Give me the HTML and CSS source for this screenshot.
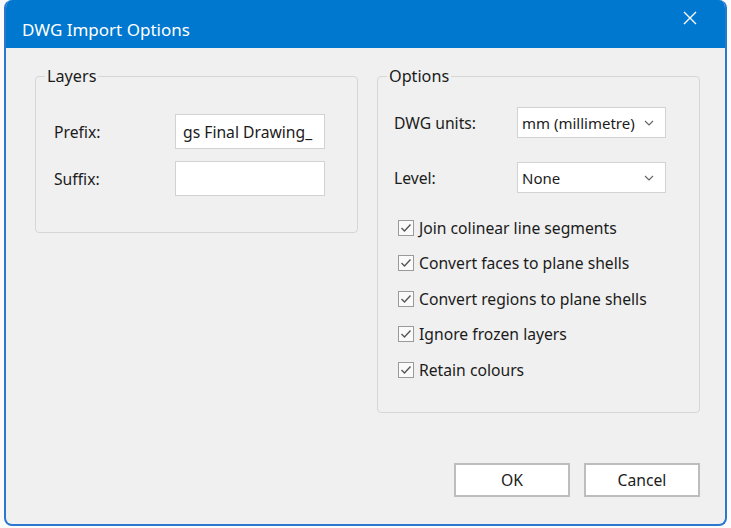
FILE: index.html
```html
<!DOCTYPE html>
<html lang="en">
<head>
    <meta charset="UTF-8">
    <title>DWG Import Options</title>
    <link rel="stylesheet" href="styles.css">
</head>
<body>
    <div class="window">
        <div class="titlebar">
            <span class="title">DWG Import Options</span>
            <button class="close" title="Close">
                <svg width="14" height="14" viewBox="0 0 14 14"><path d="M1 1L13 13M13 1L1 13" stroke="#fff" stroke-width="1.4" fill="none"/></svg>
            </button>
        </div>

        <div class="content">
            <div class="groups">
                <fieldset class="group layers">
                    <legend>Layers</legend>
                    <div class="field">
                        <label>Prefix:</label>
                        <input class="textbox" type="text" value="gs Final Drawing_">
                    </div>
                    <div class="field">
                        <label>Suffix:</label>
                        <input class="textbox" type="text" value="">
                    </div>
                </fieldset>

                <fieldset class="group options">
                    <legend>Options</legend>
                    <div class="field">
                        <label>DWG units:</label>
                        <div class="combo">
                            <span>mm (millimetre)</span>
                            <svg width="10" height="6" viewBox="0 0 10 6"><path d="M1 1L5 5L9 1" stroke="#666" stroke-width="1.2" fill="none"/></svg>
                        </div>
                    </div>
                    <div class="field">
                        <label>Level:</label>
                        <div class="combo">
                            <span>None</span>
                            <svg width="10" height="6" viewBox="0 0 10 6"><path d="M1 1L5 5L9 1" stroke="#666" stroke-width="1.2" fill="none"/></svg>
                        </div>
                    </div>
                    <div class="checks">
                        <label class="check"><span class="box"><svg width="12" height="10" viewBox="0 0 12 10"><path d="M1.5 5L4.5 8L10.5 1.5" stroke="#555" stroke-width="1.4" fill="none"/></svg></span>Join colinear line segments</label>
                        <label class="check"><span class="box"><svg width="12" height="10" viewBox="0 0 12 10"><path d="M1.5 5L4.5 8L10.5 1.5" stroke="#555" stroke-width="1.4" fill="none"/></svg></span>Convert faces to plane shells</label>
                        <label class="check"><span class="box"><svg width="12" height="10" viewBox="0 0 12 10"><path d="M1.5 5L4.5 8L10.5 1.5" stroke="#555" stroke-width="1.4" fill="none"/></svg></span>Convert regions to plane shells</label>
                        <label class="check"><span class="box"><svg width="12" height="10" viewBox="0 0 12 10"><path d="M1.5 5L4.5 8L10.5 1.5" stroke="#555" stroke-width="1.4" fill="none"/></svg></span>Ignore frozen layers</label>
                        <label class="check"><span class="box"><svg width="12" height="10" viewBox="0 0 12 10"><path d="M1.5 5L4.5 8L10.5 1.5" stroke="#555" stroke-width="1.4" fill="none"/></svg></span>Retain colours</label>
                    </div>
                </fieldset>
            </div>

            <div class="buttons">
                <button class="btn">OK</button>
                <button class="btn">Cancel</button>
            </div>
        </div>
    </div>
</body>
</html>
```

FILE: styles.css
```css
body {
    margin: 0;
    background: #fbfbfb;
    font-family: "Noto Sans", "Open Sans", sans-serif;
    font-size: 15.7px;
    color: #1b1b1b;
}
.window {
    margin-left: 4px;
    width: 723px;
    height: 526px;
    box-sizing: border-box;
    border: 2px solid #2b78d0;
    border-top: none;
    border-radius: 8px;
    overflow: hidden;
    background: #f0f0f0;
}
.titlebar {
    height: 48px;
    background: #0078cf;
    display: flex;
    justify-content: space-between;
    align-items: flex-start;
    padding: 0 28px 0 16px;
}
.title {
    color: #fff;
    font-size: 17px;
    line-height: 20px;
    margin-top: 20px;
}
.close {
    background: none;
    border: none;
    padding: 0;
    margin-top: 11px;
    width: 14px;
    height: 14px;
    display: flex;
}
.content {
    padding: 18px 25px 0 29px;
}
.groups {
    display: flex;
    gap: 19px;
    align-items: flex-start;
}
.group {
    margin: 0;
    padding: 0;
    width: 323px;
    box-sizing: border-box;
    border: 1px solid #d6d6d6;
    border-radius: 4px;
    min-inline-size: 0;
}
.group legend {
    margin-left: 9px;
    padding: 0 2px;
    line-height: 20px;
    font-size: 16.2px;
}
.layers {
    padding: 28px 0 36px 0;
}
.layers .field {
    margin-left: 18px;
}
.layers .field + .field {
    margin-top: 12px;
}
.field {
    display: flex;
    align-items: center;
}
.field label {
    width: 121px;
}
.textbox {
    width: 150px;
    height: 35px;
    box-sizing: border-box;
    border: 1px solid #d2d2d2;
    background: #fff;
    font: inherit;
    color: inherit;
    padding: 0 0 0 7px;
    outline: none;
}
.options {
    padding: 21px 0 24px 0;
}
.options .field {
    margin-left: 16px;
}
.options .field label {
    width: 123px;
}
.options .field + .field {
    margin-top: 24px;
}
.combo {
    width: 149px;
    height: 31px;
    box-sizing: border-box;
    border: 1px solid #d2d2d2;
    background: #fff;
    display: flex;
    align-items: center;
    justify-content: space-between;
    padding: 0 11px 0 4px;
    font-size: 15px;
}
.checks {
    margin-top: 17px;
    margin-left: 20px;
}
.check {
    display: flex;
    align-items: center;
    height: 35.5px;
}
.box {
    width: 16px;
    height: 16px;
    box-sizing: border-box;
    border: 1px solid #9a9a9a;
    background: #fafafa;
    display: flex;
    align-items: center;
    justify-content: center;
    margin-right: 5px;
}
.buttons {
    display: flex;
    justify-content: flex-end;
    gap: 14px;
    margin-top: 50px;
}
.btn {
    width: 116px;
    height: 34px;
    border: 2px solid #bdbdbd;
    background: #fff;
    font: inherit;
    color: inherit;
    padding: 0;
}
```
